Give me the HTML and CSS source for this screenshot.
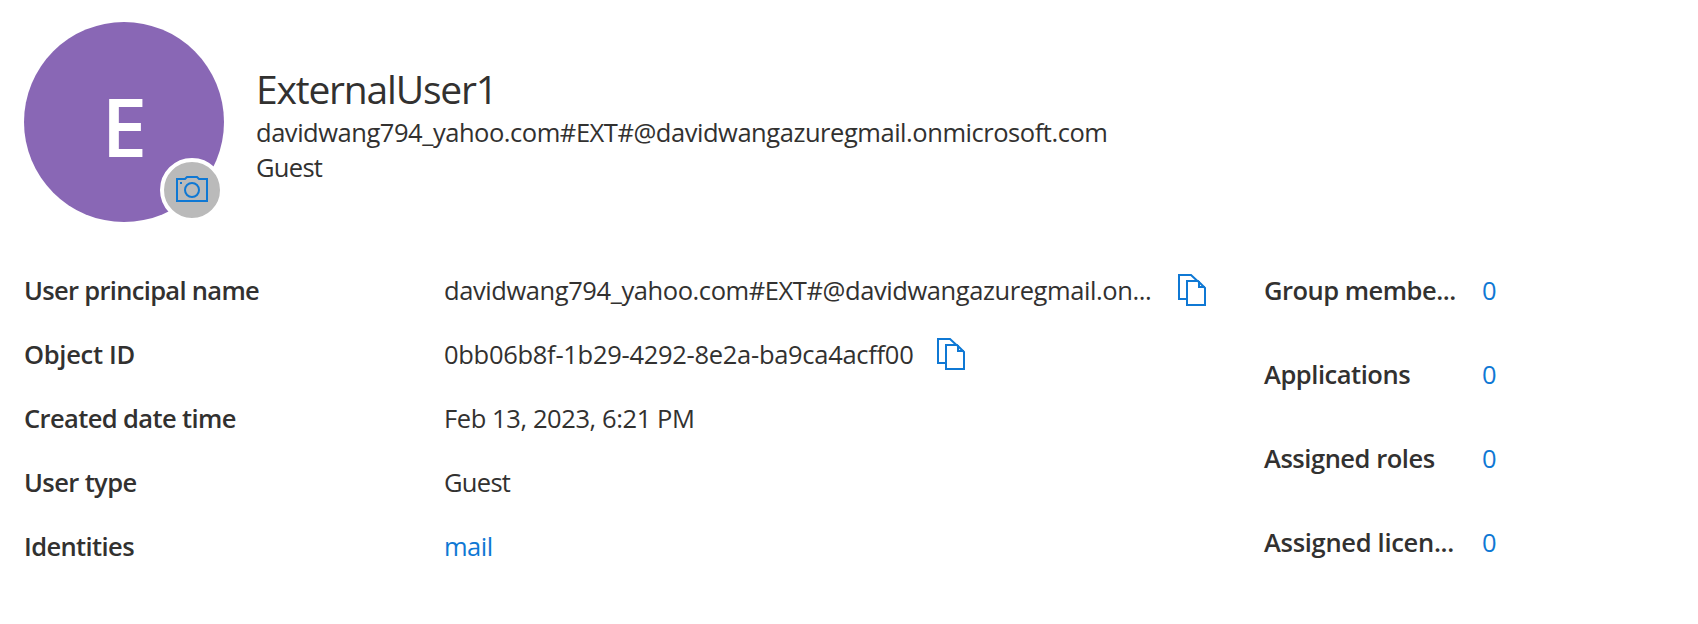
FILE: index.html
```html
<!DOCTYPE html>
<html lang="en">
<head>
<meta charset="utf-8">
<title>ExternalUser1</title>
<link rel="stylesheet" href="styles.css">
</head>
<body>
<svg class="defs" width="0" height="0" aria-hidden="true">
  <symbol id="copy" viewBox="0 0 28 32">
    <path d="M8 25H1V1H13L20 7.500" fill="none" stroke="currentColor" stroke-width="2"/>
    <path d="M9 7H20L27 14V31H9ZM21 7V13H27" fill="none" stroke="currentColor" stroke-width="2"/>
  </symbol>
</svg>
<header class="profile">
  <div class="avatar"><span class="initial">E</span>
    <span class="badge">
      <svg class="camera" viewBox="0 0 32 26" width="32" height="26">
        <path d="M1 3H9L11 1H21L23 3H31V25H1Z" fill="none" stroke="currentColor" stroke-width="2"/>
        <circle cx="16" cy="14" r="7" fill="none" stroke="currentColor" stroke-width="2"/>
        <path d="M4 6h2v2H4z" fill="currentColor"/>
      </svg>
    </span>
  </div>
  <div class="identity">
    <h1 class="name">ExternalUser1</h1>
    <span class="line upn">davidwang794_yahoo.com#EXT#@davidwangazuregmail.onmicrosoft.com</span>
    <span class="line v4">Guest</span>
  </div>
</header>
<main class="details">
  <dl class="props">
    <dt><span class="t1">User principal name</span></dt><dd><span class="v1">davidwang794_yahoo.com#EXT#@davidwangazuregmail.on...</span><svg class="copy"><use href="#copy"/></svg></dd>
    <dt><span class="t2">Object ID</span></dt><dd><span class="v2">0bb06b8f-1b29-4292-8e2a-ba9ca4acff00</span><svg class="copy"><use href="#copy"/></svg></dd>
    <dt><span class="t3">Created date time</span></dt><dd><span class="v3">Feb 13, 2023, 6:21 PM</span></dd>
    <dt><span class="t3">User type</span></dt><dd><span class="v4">Guest</span></dd>
    <dt><span class="t3">Identities</span></dt><dd><a class="link v5">mail</a></dd>
  </dl>
  <dl class="counts">
    <dt><span class="c1">Group membe...</span></dt><dd><a class="link">0</a></dd>
    <dt><span class="c2">Applications</span></dt><dd><a class="link">0</a></dd>
    <dt><span class="c2">Assigned roles</span></dt><dd><a class="link">0</a></dd>
    <dt><span class="c4">Assigned licen...</span></dt><dd><a class="link">0</a></dd>
  </dl>
</main>
</body>
</html>
```
FILE: styles.css
```css
* { box-sizing: border-box; }
body {
  margin: 0;
  padding: 22px 24px 0;
  background: #fff;
  color: #323130;
  font-family: "Open Sans", "Noto Sans", sans-serif;
  font-size: 25.500px;
  line-height: 36px;
  white-space: nowrap;
}
.defs { position: absolute; }
.profile { display: flex; height: 200px; gap: 32px; }
.avatar {
  position: relative;
  flex: none;
  width: 200px;
  height: 200px;
  border-radius: 50%;
  background: #8967b5;
  color: #fff;
  text-align: center;
}
.initial { display: block; padding-left: 1px; font-size: 82px; font-weight: 600; line-height: 206px; }
.badge {
  position: absolute;
  left: 136px;
  top: 136px;
  display: flex;
  align-items: center;
  justify-content: center;
  width: 64px;
  height: 64px;
  padding-bottom: 2px;
  border: 4px solid #fff;
  border-radius: 50%;
  background: #bababa;
  color: #0f78d4;
}
.camera { display: block; }
.identity { display: flex; flex-direction: column; padding-top: 41px; }
.name { margin: 0; font-size: 39px; font-weight: 400; line-height: 52px; letter-spacing: -1.2px; }
.line { line-height: 35px; }
.details { display: flex; padding-top: 35px; }
dl, dd { margin: 0; }
.props { display: grid; grid-template-columns: 420px 820px; grid-auto-rows: 64px; }
.counts { display: grid; grid-template-columns: 218px auto; grid-auto-rows: 84px; }
dt { font-weight: 600; line-height: 66px; }
dd { display: flex; align-items: center; height: 66px; }
.link, .copy { color: #0f78d4; }
.copy { flex: none; width: 28px; height: 32px; margin-left: 24px; }

/* Tracking per label and value */
.upn { letter-spacing: -0.46px; }
.t1 { letter-spacing: -0.68px; }
.t2 { letter-spacing: -0.3px; }
.t3 { letter-spacing: -0.61px; }
.v1 { width: 710px; letter-spacing: -0.42px; }
.v2 { width: 469px; letter-spacing: -0.29px; }
.v3 { letter-spacing: -0.4px; }
.v4 { letter-spacing: -0.7px; }
.v5 { letter-spacing: -0.5px; }
.c1 { letter-spacing: -0.5px; }
.c2 { letter-spacing: -0.46px; }
.c4 { letter-spacing: -0.3px; }
```
